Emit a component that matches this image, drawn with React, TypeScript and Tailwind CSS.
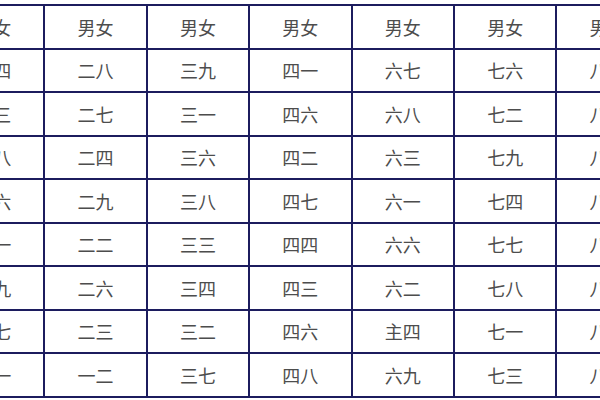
const rows: string[][] = [
  ["男女", "男女", "男女", "男女", "男女", "男女", "男女"],
  ["一四", "二八", "三九", "四一", "六七", "七六", "八一"],
  ["一三", "二七", "三一", "四六", "六八", "七二", "八二"],
  ["一八", "二四", "三六", "四二", "六三", "七九", "八三"],
  ["一六", "二九", "三八", "四七", "六一", "七四", "八四"],
  ["一一", "二二", "三三", "四四", "六六", "七七", "八五"],
  ["一九", "二六", "三四", "四三", "六二", "七八", "八六"],
  ["一七", "二三", "三二", "四六", "主四", "七一", "八七"],
  ["一一", "一二", "三七", "四八", "六九", "七三", "八八"],
];

export default function App() {
  return (
    <div className="h-[400px] w-[600px] overflow-hidden bg-white">
      <div className="-ml-[59px] mt-[4px] grid w-max grid-cols-[repeat(7,100.4px)] gap-[2px] bg-[#1c1c5e] p-[2px]">
        {rows.map((row, r) =>
          row.map((cell, c) => (
            <div
              key={`${r}-${c}`}
              className="flex h-[41.5px] items-center justify-center bg-white text-[18px] leading-none text-[#4d4d4d] [font-family:'Noto_Sans_CJK_SC','Noto_Sans',sans-serif]"
            >
              {cell}
            </div>
          ))
        )}
      </div>
    </div>
  );
}
